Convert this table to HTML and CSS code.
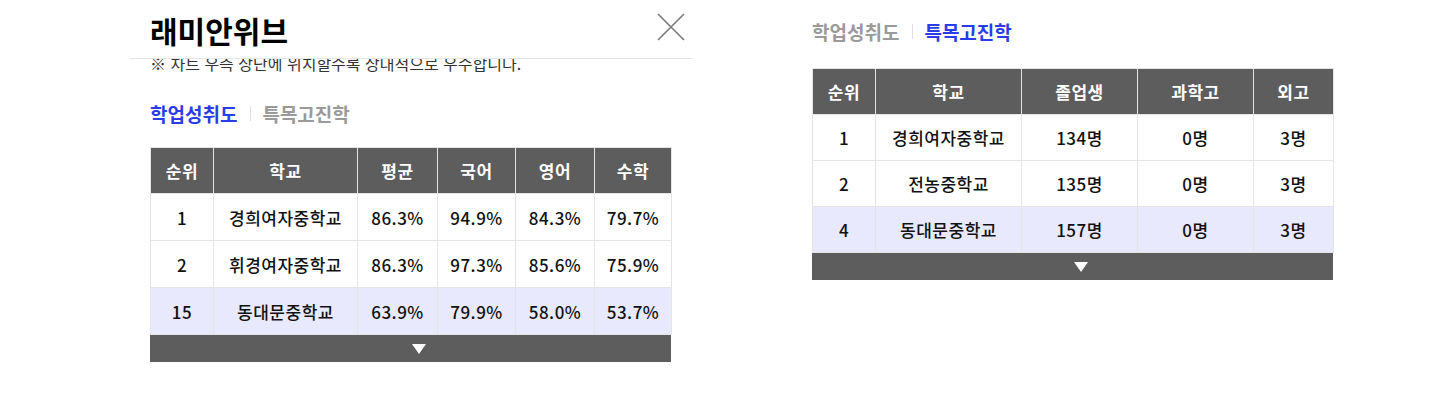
FILE: index.html
```html
<!DOCTYPE html>
<html lang="ko">
<head>
    <meta charset="UTF-8">
    <meta name="viewport" content="width=device-width, initial-scale=1.0">
    <title>학교 정보</title>
    <link rel="stylesheet" href="styles.css">
</head>
<body>
    <div class="page">
        <!-- 왼쪽: 팝업 (학업성취도) -->
        <div class="panel popup">
            <div class="popup-head">
                <h1 class="popup-title">래미안위브</h1>
                <button class="close" type="button" aria-label="닫기">
                    <svg width="30" height="30" viewBox="0 0 30 30">
                        <path d="M2 2 L28 28 M28 2 L2 28" stroke="#7a7a7a" stroke-width="1.6" fill="none"/>
                    </svg>
                </button>
            </div>
            <div class="popup-body">
                <p class="note">※ 차트 우측 상단에 위치할수록 상대적으로 우수합니다.</p>
                <div class="tabs">
                    <span class="tab active">학업성취도</span>
                    <span class="tab-sep"></span>
                    <span class="tab">특목고진학</span>
                </div>
                <table class="rank">
                    <colgroup>
                        <col style="width:63px"><col style="width:144px"><col style="width:80px">
                        <col style="width:78px"><col style="width:79px"><col style="width:77px">
                    </colgroup>
                    <thead>
                        <tr><th>순위</th><th>학교</th><th>평균</th><th>국어</th><th>영어</th><th>수학</th></tr>
                    </thead>
                    <tbody>
                        <tr><td>1</td><td>경희여자중학교</td><td>86.3%</td><td>94.9%</td><td>84.3%</td><td>79.7%</td></tr>
                        <tr><td>2</td><td>휘경여자중학교</td><td>86.3%</td><td>97.3%</td><td>85.6%</td><td>75.9%</td></tr>
                        <tr class="mine"><td>15</td><td>동대문중학교</td><td>63.9%</td><td>79.9%</td><td>58.0%</td><td>53.7%</td></tr>
                    </tbody>
                </table>
                <div class="more"><span class="arrow"></span></div>
            </div>
        </div>

        <!-- 오른쪽: 특목고진학 -->
        <div class="panel plain">
            <div class="tabs">
                <span class="tab">학업성취도</span>
                <span class="tab-sep"></span>
                <span class="tab active">특목고진학</span>
            </div>
            <table class="rank">
                <colgroup>
                    <col style="width:63px"><col style="width:146px"><col style="width:116px">
                    <col style="width:116px"><col style="width:80px">
                </colgroup>
                <thead>
                    <tr><th>순위</th><th>학교</th><th>졸업생</th><th>과학고</th><th>외고</th></tr>
                </thead>
                <tbody>
                    <tr><td>1</td><td>경희여자중학교</td><td>134명</td><td>0명</td><td>3명</td></tr>
                    <tr><td>2</td><td>전농중학교</td><td>135명</td><td>0명</td><td>3명</td></tr>
                    <tr class="mine"><td>4</td><td>동대문중학교</td><td>157명</td><td>0명</td><td>3명</td></tr>
                </tbody>
            </table>
            <div class="more"><span class="arrow"></span></div>
        </div>
    </div>
</body>
</html>
```

FILE: styles.css
```css
/* 페이지 기본 */
body {
    margin: 0;
    background-color: #fff;
    font-family: "Noto Sans CJK KR", "Noto Sans", sans-serif;
    color: #111;
}

.page {
    display: flex;
    align-items: flex-start;
    gap: 120px;
    padding-left: 130px;
}

/* 팝업 */
.popup {
    width: 562px;
}

.popup-head {
    position: relative;
    z-index: 1;
    display: flex;
    align-items: center;
    justify-content: space-between;
    height: 58px;
    padding: 0 6px 0 20px;
    background-color: #fff;
    border-bottom: 1px solid #e6e6e6;
}

.popup-title {
    margin: 0;
    font-size: 30px;
    font-weight: 700;
    color: #000;
    line-height: 1;
    padding-top: 2px;
}

.close {
    border: none;
    background: none;
    padding: 0;
    width: 30px;
    height: 30px;
    margin-bottom: 4px;
    cursor: pointer;
}

.close svg {
    display: block;
}

.popup-body {
    padding: 0 20px;
}

.note {
    margin: -6px 0 0;
    font-size: 16px;
    line-height: 20px;
    color: #333;
    white-space: nowrap;
}

/* 탭 */
.tabs {
    display: flex;
    align-items: center;
    height: 24px;
    margin-top: 28px;
    margin-bottom: 22px;
}

.tab {
    font-size: 19px;
    font-weight: 700;
    color: #9a9a9a;
}

.tab.active {
    color: #2a3ce8;
}

.tab-sep {
    width: 1px;
    height: 15px;
    margin: 0 11px 0 13px;
    background-color: #e0e0e0;
}

.plain {
    width: 521px;
    padding-top: 19px;
}

.plain .tabs {
    margin-top: 0;
    margin-bottom: 25px;
}

/* 표 */
.rank {
    width: 521px;
    table-layout: fixed;
    border-collapse: collapse;
    border: 1px solid #e4e4e4;
}

.rank th,
.rank td {
    border: 1px solid #e4e4e4;
    text-align: center;
    padding: 0;
    font-size: 17px;
    letter-spacing: 0.5px;
    white-space: nowrap;
}

.rank th {
    height: 45px;
    background-color: #5d5d5d;
    color: #fff;
    font-weight: 700;
}

.rank td {
    height: 46px;
    font-weight: 500;
    color: #111;
}

.plain .rank td {
    height: 45px;
}

.rank tr.mine td {
    background-color: #e8e9fc;
}

/* 더보기 바 */
.more {
    display: flex;
    justify-content: center;
    align-items: center;
    width: 521px;
    height: 27px;
    background-color: #5d5d5d;
}

.arrow {
    width: 0;
    height: 0;
    margin-left: 16px;
    border-left: 7px solid transparent;
    border-right: 7px solid transparent;
    border-top: 10px solid #fff;
}
```
